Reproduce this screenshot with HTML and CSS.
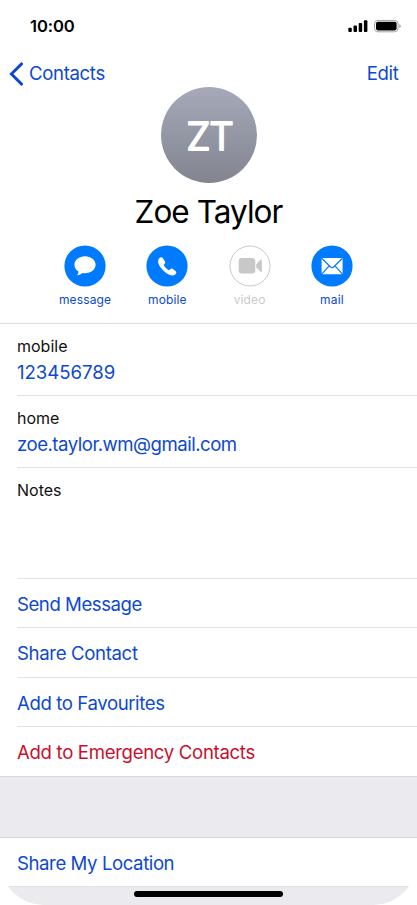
FILE: index.html
```html
<!DOCTYPE html>
<html lang="en">
<head>
<meta charset="utf-8">
<title>Zoe Taylor</title>
<link rel="stylesheet" href="styles.css">
</head>
<body>
<main class="screen">
  <header class="status">
    <span class="time">10:00</span>
    <svg class="status-icons" width="54" height="14" viewBox="0 0 54 14">
      <rect x="0.3" y="8.7" width="3.5" height="4.3" rx="1"/>
      <rect x="5.5" y="6.6" width="3.5" height="6.4" rx="1"/>
      <rect x="10.7" y="4" width="3.5" height="9" rx="1"/>
      <rect x="15.9" y="1.2" width="3.5" height="11.8" rx="1"/>
      <rect x="26.5" y="1.4" width="23.6" height="11.4" rx="3.5" fill="none" stroke="#a5a5a5"/>
      <rect x="28" y="2.8" width="20.6" height="8.6" rx="1.8"/>
      <path d="M51.3 5.2c2 .8 2 3 0 3.8z" fill="#999"/>
    </svg>
  </header>
  <nav class="nav">
    <a class="back"><svg width="15" height="24" viewBox="0 0 15 24"><path d="M12.6 1.900 2.400 12l10.200 10.100" fill="none" stroke="#0d49cf" stroke-width="2.9" stroke-linecap="round"/></svg><span class="contacts">Contacts</span></a>
    <a class="edit">Edit</a>
  </nav>
  <section class="profile">
    <div class="avatar"><svg width="96" height="96" viewBox="0 0 96 96"><text class="initials" x="25.500 48.300" y="63">ZT</text></svg></div>
    <h1 class="name">Zoe Taylor</h1>
    <div class="actions">
      <div class="action"><svg class="icon" width="42" height="42" viewBox="0 0 42 42"><circle cx="21" cy="21" r="20.6" fill="#007aff"/><path d="M21 11.3c-6 0-10.6 3.8-10.6 8.500 0 2.9 1.6 5.3 4.1 6.8.1 1.500-.5 2.700-1.400 3.800 2.300-.1 4.100-1.100 5.300-2.300.8.2 1.700.2 2.600.2 6 0 10.600-3.700 10.600-8.500s-4.600-8.500-10.600-8.500z" fill="#fff"/></svg><span class="label message">message</span></div>
      <div class="action"><svg class="icon" width="42" height="42" viewBox="0 0 42 42"><circle cx="21" cy="21" r="20.6" fill="#007aff"/><path d="M13 13.400c1-1.300 2.500-1.700 3.500-.6l2.400 3.400c.7 1 .4 1.900-.4 2.700-.9.800-.8 1.300.1 2.500 1 1.300 1.900 2.200 3.100 3.100 1 .8 1.600.8 2.300-.1.8-.9 1.800-1.100 2.800-.4l2.700 1.900c1.200.9 1 2.200-.1 3.300-1.800 1.900-4.800 1.500-8.100-.5-2.300-1.400-4.600-3.500-6.400-5.900-2.700-3.600-3.600-7.200-1.900-9.400z" fill="#fff"/></svg><span class="label">mobile</span></div>
      <div class="action"><svg class="icon" width="42" height="42" viewBox="0 0 42 42"><circle cx="21" cy="21" r="20" fill="#fff" stroke="#c9c9c9"/><rect x="9.700" y="13" width="16.600" height="15.400" rx="3" fill="#c8c8c8"/><path d="M27.300 19.200 31 15.200Q32.900 13.600 32.900 15.800v9.900q0 2.200-1.900.6l-3.700-4z" fill="#c8c8c8"/></svg><span class="label disabled">video</span></div>
      <div class="action"><svg class="icon" width="42" height="42" viewBox="0 0 42 42"><circle cx="21" cy="21" r="20.600" fill="#007aff"/><rect x="10.600" y="13" width="21" height="16.300" rx="1" fill="#fff"/><path d="m11 13.500 8.300 8.200q1.800 1.700 3.600 0l8.300-8.200M11 28.800l7.200-8M31.200 28.800 24 20.800" fill="none" stroke="#007aff" stroke-width="1.200"/></svg><span class="label">mail</span></div>
    </div>
  </section>
  <section class="details">
    <div class="field"><span class="key mobile">mobile</span><a class="value phone">123456789</a></div>
    <div class="field"><span class="key">home</span><a class="value email">zoe.taylor.wm@gmail.com</a></div>
    <div class="field notes"><span class="key">Notes</span></div>
    <a class="row send">Send Message</a>
    <a class="row">Share Contact</a>
    <a class="row fav">Add to Favourites</a>
    <a class="row danger">Add to Emergency Contacts</a>
  </section>
  <section class="location"><a class="row">Share My Location</a></section>
  <footer class="footer"><div class="home-bar"></div></footer>
</main>
</body>
</html>
```
FILE: styles.css
```css
* { box-sizing: border-box; }
body { margin: 0; background: #fff; font-family: Inter, "Liberation Sans", sans-serif; }
.screen {
  width: 417px; height: 905px; overflow: hidden;
  display: flex; flex-direction: column;
  background: #fff; border-radius: 0 0 44px 44px;
  color: #0d49cf; font-size: 18.6px; letter-spacing: -0.35px;
}
.status { height: 52px; flex: none; padding: 0 15px 0 30px; display: flex; justify-content: space-between; align-items: center; background: #fff; color: #000; }
.time { font-size: 16.6px; font-weight: 600; letter-spacing: -0.1px; }
.status-icons { display: block; }
.nav { height: 35px; flex: none; padding: 0 18.5px 0 9px; display: flex; justify-content: space-between; align-items: flex-start; background: #fff; line-height: 43px; }
.back { display: flex; align-items: center; gap: 5px; }
.profile { height: 237px; flex: none; background: #fff; border-bottom: 1px solid #dcdce0; display: flex; flex-direction: column; align-items: center; }
.avatar { width: 96px; height: 96px; border-radius: 50%; background: linear-gradient(#a5a9b9, #82858f); }
.initials { fill: #fff; stroke: #fff; stroke-width: 2; stroke-linejoin: round; font-size: 38.5px; font-weight: 300; letter-spacing: 0; }
.name { margin: 9px 0 0; color: #000; font-size: 31.5px; line-height: 40px; font-weight: 400; letter-spacing: -0.95px; }
.actions { display: grid; grid-template-columns: repeat(4, 82.3px); margin-top: 13px; }
.action { display: flex; flex-direction: column; align-items: center; }
.icon { display: block; }
.label { margin-top: 4px; font-size: 12px; line-height: 18px; letter-spacing: 0.15px; }
.disabled { color: #cacaca; }
.details { background: #fff; padding-left: 17px; border-bottom: 1px solid #d8d8dd; height: 453px; flex: none; }
.field { height: 72px; padding-top: 11px; border-bottom: 1px solid #e2e2e4; display: flex; flex-direction: column; }
.key { color: #111; font-size: 16px; line-height: 22px; letter-spacing: 0; }
.value { line-height: 30px; }
.phone { letter-spacing: -0.03px; }
.email { letter-spacing: -0.5px; }
.notes { height: 111px; }
.row { display: block; height: 49.4px; line-height: 50px; border-bottom: 1px solid #e2e2e4; }
.send { letter-spacing: -0.45px; }
.fav { letter-spacing: -0.4px; }
.danger { color: #c8102e; border: 0; letter-spacing: -0.32px; }
.location { height: 110px; flex: none; border-top: 60px solid #eaeaef; }
.location .row { background: #fff; padding-left: 17px; border-top: 1px solid #d8d8dd; height: 50px; letter-spacing: -0.42px; }
.footer { flex: 1; padding-top: 4px; background: #eaeaef; }
.home-bar { width: 149px; height: 6px; border-radius: 3px; background: #000; margin: 0 auto; }
```
